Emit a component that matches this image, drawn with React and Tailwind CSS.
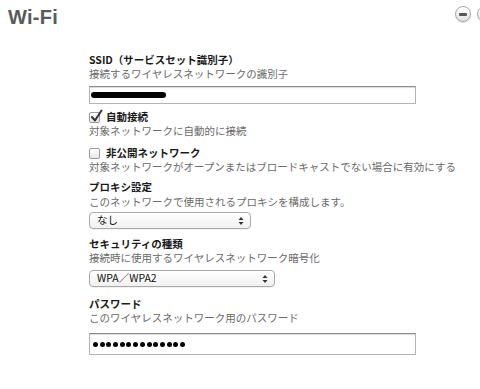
import React from 'react'

const jp = { fontFamily: '"Noto Sans CJK JP", "Liberation Sans", sans-serif' }

function MinusCircle() {
  return (
    <div className="w-[16px] h-[16px] shrink-0 rounded-full border border-[#a8a8a8] bg-gradient-to-b from-[#ffffff] to-[#e2e2e2] flex items-center justify-center shadow-[0_1px_1px_rgba(0,0,0,0.15)]">
      <div className="w-[8px] h-[3px] rounded-[1px] bg-[#555]" />
    </div>
  )
}

function Checkbox({ checked }) {
  return (
    <div className="relative w-[11px] h-[11px] shrink-0 rounded-[2px] border border-[#9a9a9a] bg-gradient-to-b from-[#ffffff] to-[#e8e8e8]">
      {checked && (
        <svg className="absolute left-[0px] top-[-4px]" width="13" height="14" viewBox="0 0 13 14">
          <path d="M2 8 L5 11.5 L11.5 1.5" fill="none" stroke="#333" strokeWidth="2" strokeLinecap="round" strokeLinejoin="round" />
        </svg>
      )}
    </div>
  )
}

function Select({ value, width }) {
  return (
    <div
      className={`${width} h-[17px] flex items-center justify-between rounded-[4px] border border-[#a9a9a9] bg-gradient-to-b from-[#ffffff] to-[#f1f1f1] pl-[7px] pr-[6px] text-[10.5px] leading-none text-[#111] shadow-[0_1px_0_rgba(0,0,0,0.05)]`}
    >
      <span>{value}</span>
      <svg width="6" height="10" viewBox="0 0 6 10">
        <path d="M0.5 4 L3 1 L5.5 4 Z M0.5 6 L3 9 L5.5 6 Z" fill="#333" />
      </svg>
    </div>
  )
}

function Label({ children }) {
  return <div className="h-[14px] leading-[14px] text-[10.5px] font-bold text-[#1a1a1a]">{children}</div>
}

function Desc({ children }) {
  return <div className="h-[14px] leading-[14px] text-[10.5px] text-[#6a6a6a] whitespace-nowrap">{children}</div>
}

function CheckRow({ checked, children }) {
  return (
    <div className="h-[14px] flex items-center gap-[6px]">
      <Checkbox checked={checked} />
      <span className="leading-[14px] text-[10.5px] font-bold text-[#1a1a1a]">{children}</span>
    </div>
  )
}

export default function App() {
  const dots = Array.from({ length: 14 })
  return (
    <div className="w-[480px] h-[389px] bg-white overflow-hidden" style={jp}>
      <div className="flex items-start justify-between pl-[8px] pt-[5px] h-[29px]">
        <h1
          className="text-[20px] leading-[24px] font-bold text-[#5a5a5a] tracking-[0.3px]"
          style={{ fontFamily: '"Liberation Sans", Arial, sans-serif' }}
        >
          Wi-Fi
        </h1>
        <div className="flex gap-[6px] pt-[1px] mr-[-13px]">
          <MinusCircle />
          <MinusCircle />
        </div>
      </div>

      <div className="ml-[89px] mt-[24px] flex flex-col">
        <Label>SSID（サービスセット識別子）</Label>
        <Desc>接続するワイヤレスネットワークの識別子</Desc>
        <div className="mt-[5px] w-[327px] h-[18px] border border-[#b3b3b3] border-t-[#8c8c8c] bg-white shadow-[inset_0_1px_1px_rgba(0,0,0,0.15)] flex items-center pl-[1px]">
          <div className="w-[75px] h-[6px] rounded-full bg-black" />
        </div>

        <div className="mt-[6px]">
          <CheckRow checked>自動接続</CheckRow>
        </div>
        <Desc>対象ネットワークに自動的に接続</Desc>

        <div className="mt-[8px]">
          <CheckRow>非公開ネットワーク</CheckRow>
        </div>
        <Desc>対象ネットワークがオープンまたはブロードキャストでない場合に有効にする</Desc>

        <div className="mt-[6px]">
          <Label>プロキシ設定</Label>
        </div>
        <div className="mt-[1px]">
          <Desc>このネットワークで使用されるプロキシを構成します。</Desc>
        </div>
        <div className="mt-[3px]">
          <Select value="なし" width="w-[162px]" />
        </div>

        <div className="mt-[8px]">
          <Label>セキュリティの種類</Label>
        </div>
        <Desc>接続時に使用するワイヤレスネットワーク暗号化</Desc>
        <div className="mt-[5px]">
          <Select value="WPA／WPA2" width="w-[186px]" />
        </div>

        <div className="mt-[10px]">
          <Label>パスワード</Label>
        </div>
        <Desc>このワイヤレスネットワーク用のパスワード</Desc>
        <div className="mt-[8px] w-[327px] h-[22px] border border-[#b3b3b3] border-t-[#8c8c8c] bg-white shadow-[inset_0_1px_1px_rgba(0,0,0,0.15)] flex items-center gap-[1.7px] pl-[3px]">
          {dots.map((_, i) => (
            <div key={i} className="w-[5px] h-[5px] rounded-full bg-black" />
          ))}
        </div>
      </div>
    </div>
  )
}
